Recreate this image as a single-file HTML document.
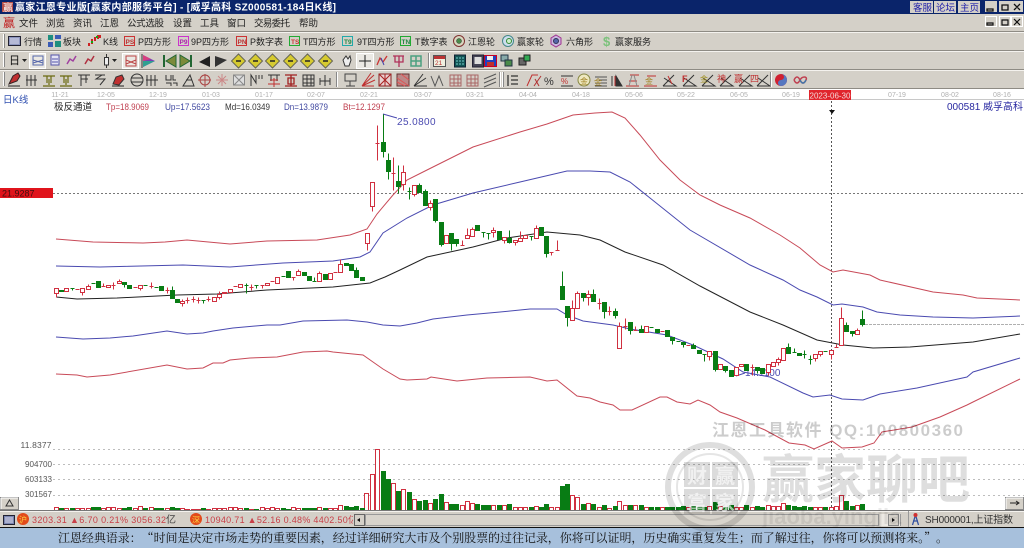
<!DOCTYPE html>
<html><head><meta charset="utf-8"><title>赢家江恩专业版</title>
<style>
html,body{margin:0;padding:0;background:#fff;overflow:hidden}
svg{display:block}
#root{filter:blur(.35px)}
text{font-family:"Liberation Sans","WenQuanYi Zen Hei","Noto Sans CJK SC",sans-serif}
.m{font-size:9.5px;fill:#222}
.t{font-size:9px;fill:#222}
.d{font-size:7px;fill:#b0b0b0}
.v{font-size:8.5px;fill:#555}
.i{fill:none;stroke:#333;stroke-width:1}
.r{fill:none;stroke:#c8323c;stroke-width:1}
</style></head><body>
<svg id="root" width="1024" height="548" viewBox="0 0 1024 548" xmlns="http://www.w3.org/2000/svg">
<rect width="1024" height="548" fill="#fff"/>
<!-- title -->
<rect width="1024" height="14" fill="#0a246a"/>
<rect x="2" y="2" width="11" height="10" fill="#b8504a"/>
<text x="3" y="11" font-size="10" fill="#fff">赢</text>
<text x="15" y="10.500" font-size="10" font-weight="bold" fill="#fff" textLength="321">赢家江恩专业版[赢家内部服务平台] - [威孚高科  SZ000581-184日K线]</text>
<g fill="#d4d0c8"><rect x="910" y="1" width="23" height="12"/><rect x="934" y="1" width="22" height="12"/><rect x="958" y="1" width="22" height="12"/>
<rect x="985" y="1" width="12" height="11"/><rect x="999" y="1" width="12" height="11"/><rect x="1011" y="1" width="12" height="11"/></g>
<g font-size="9.500" fill="#1c1caa"><text x="913" y="11">客服</text><text x="936" y="11">论坛</text><text x="960" y="11">主页</text></g>
<path d="M987 9h6v2h-6zM1002 5h6v5h-6zM1014 4l6 6M1020 4l-6 6" fill="none" stroke="#111" stroke-width="1.300"/>
<!-- chrome -->
<rect y="14" width="1024" height="75" fill="#d4d0c8"/>
<path d="M0 31.500h1024M0 50.500h1024M0 69.500h1024M0 88.500h1024" stroke="#8e8b84"/>
<path d="M0 32.500h1024M0 51.500h1024M0 70.500h1024" stroke="#f4f2ee"/>
<text x="3" y="27" font-size="12" fill="#c02020">赢</text>
<g class="m">
<text x="19" y="26.500">文件</text><text x="46" y="26.500">浏览</text><text x="73" y="26.500">资讯</text><text x="100" y="26.500">江恩</text><text x="127" y="26.500" textLength="37">公式选股</text><text x="173" y="26.500">设置</text><text x="200" y="26.500">工具</text><text x="227" y="26.500">窗口</text><text x="254" y="26.500" textLength="36">交易委托</text><text x="299" y="26.500">帮助</text>
</g>
<g fill="#d4d0c8" stroke="#fff"><rect x="985.500" y="16.500" width="11" height="10"/><rect x="999.500" y="16.500" width="11" height="10"/><rect x="1011.500" y="16.500" width="11" height="10"/></g>
<path d="M987 23h6v2h-6zM1002 20h6v5h-6zM1014 19l6 6M1020 19l-6 6" fill="none" stroke="#111" stroke-width="1.200"/>
<!-- grip bars -->
<path d="M3.500 34v14M3.500 53v14M3.500 72v14" stroke="#fff"/><path d="M4.500 34v14M4.500 53v14M4.500 72v14" stroke="#888"/>
<!-- toolbar 1 -->
<rect x="8.500" y="36.500" width="12" height="9" fill="#8d95bf" stroke="#223"/><path d="M10 39h9M10 41h9M10 43h9" stroke="#dde" />
<g fill="#1f8f7f"><rect x="48" y="35" width="5" height="5"/><rect x="55" y="35" width="6" height="4" fill="#3b5bb5"/><rect x="48" y="42" width="5" height="5" fill="#3b5bb5"/><rect x="55" y="41" width="6" height="6"/></g>
<path d="M89 46v-3M92 44v-5M95 41v-4M98 39v-4M100 38v-3" stroke="#c22" stroke-width="2"/><path d="M92 43v-2M97 38v-2" stroke="#1a1" stroke-width="2"/>
<g font-size="8" font-weight="bold" fill="none" stroke-width="1">
<rect x="124.500" y="36.500" width="10" height="9" stroke="#c33"/><rect x="178.500" y="36.500" width="10" height="9" stroke="#c3c"/><rect x="236.500" y="36.500" width="10" height="9" stroke="#c33"/><rect x="289.500" y="36.500" width="10" height="9" stroke="#2a3"/><rect x="342.500" y="36.500" width="10" height="9" stroke="#2aa"/><rect x="400.500" y="36.500" width="10" height="9" stroke="#2a3"/>
</g>
<g font-size="6.500" font-weight="bold"><text x="125.500" y="44" fill="#b33">PS</text><text x="179.500" y="44" fill="#a2a">P9</text><text x="237.500" y="44" fill="#b33">PN</text><text x="291" y="44" fill="#c33">TS</text><text x="344" y="44" fill="#284">T9</text><text x="401.500" y="44" fill="#284">TN</text></g>
<g class="t">
<text x="24" y="45">行情</text><text x="63" y="45">板块</text><text x="103" y="45">K线</text><text x="138" y="45">P四方形</text><text x="191" y="45">9P四方形</text><text x="250" y="45">P数字表</text><text x="303" y="45">T四方形</text><text x="357" y="45">9T四方形</text><text x="415" y="45">T数字表</text><text x="468" y="45">江恩轮</text><text x="517" y="45">赢家轮</text><text x="566" y="45">六角形</text><text x="615" y="45">赢家服务</text>
</g>
<circle cx="459" cy="41" r="5.500" fill="#d8d8c0" stroke="#803030"/><circle cx="459" cy="41" r="2.500" fill="#4a8a4a" stroke="#333" stroke-width=".5"/>
<circle cx="508" cy="41" r="5.500" fill="#cde" stroke="#488"/><circle cx="509" cy="41" r="2.500" fill="#cec" stroke="#383"/>
<path d="M556 35l5 3v6l-5 3-5-3v-6z" fill="#c8b8e0" stroke="#a03090"/><circle cx="556" cy="41" r="2.500" fill="#56a" stroke="#335"/>
<text x="603" y="46" font-size="13" font-weight="bold" fill="#7cc27c">$</text>
<!-- toolbar 2 -->
<text x="9" y="64" font-size="11" fill="#111">日</text>
<path d="M22 59h5l-2.500 3zM112 59h5l-2.500 3z" fill="#222"/>
<rect x="29.500" y="53.500" width="16" height="15" fill="#ebe9e4" stroke="#fff"/>
<rect x="122.500" y="53.500" width="16" height="15" fill="#ebe9e4" stroke="#fff"/>
<path d="M33 56h10v9H33zM33 60l10 3M43 60l-10 3" fill="none" stroke="#56a"/>
<path d="M51 55h8v10h-8zM52 59h6M52 62h6" fill="#e4e4f4" stroke="#55a"/>
<path d="M67 64l3-5 3 2 3-5" fill="none" stroke="#a040a0" stroke-width="1.500"/><path d="M85 64l3-5 3 2 3-5" fill="none" stroke="#b03040" stroke-width="1.500"/>
<path d="M106.500 54v3M106.500 65v3" stroke="#333"/><rect x="104.500" y="57.500" width="4" height="7.500" fill="#eee" stroke="#333"/>
<path d="M126 56h10v10h-10zM126 60l10 4M136 60l-10 4" fill="none" stroke="#b44"/>
<path d="M142 54v14" stroke="#333"/><path d="M143 55l12 6-12 6z" fill="#7a3fb5"/><path d="M143 61l12 0-12 6z" fill="#2fa090"/><path d="M143 55l8 4-8 2z" fill="#d84080"/>
<path d="M164 55v12" stroke="#263" stroke-width="2"/><path d="M176 55v12l-10-6z" fill="#7b8a3a" stroke="#263"/>
<path d="M191 55v12" stroke="#263" stroke-width="2"/><path d="M180 55v12l10-6z" fill="#7b8a3a" stroke="#263"/>
<path d="M210 56v11l-11-5z" fill="#222"/><path d="M215 56v11l12-7z" fill="#333"/>
<path d="M238.500 54l7 7-7 7-7-7zM255.500 54l7 7-7 7-7-7zM272.500 54l7 7-7 7-7-7zM290.500 54l7 7-7 7-7-7zM307.500 54l7 7-7 7-7-7zM325.500 54l7 7-7 7-7-7z" fill="#d6ca30" stroke="#665"/>
<path d="M236 61h5M253 61h5M270 61h5M288 61h5M305 61h5M323 61h5" stroke="#222" stroke-width="1.500"/>
<path d="M343 60l3-4 2 3 2-3 1 4-2 6h-4z" fill="#eee" stroke="#333"/>
<rect x="356.500" y="53.500" width="17" height="15" fill="#ebe9e4" stroke="#fff"/><path d="M365 55v12M359 61h12" stroke="#222"/>
<path d="M377 65l3-7 3 4 4-6" fill="none" stroke="#c33" stroke-width="1.300"/><path d="M381 58l3 7" stroke="#44a"/>
<path d="M393 56h11M395 56v6h8v-6M399 56v11" fill="none" stroke="#b0305a" stroke-width="1.300"/>
<path d="M411 56h10v10h-10zM411 61h10M416 56v10" fill="none" stroke="#4ba080" stroke-width="1.500"/>
<path d="M428.500 53v15" stroke="#888"/><path d="M429.500 53v15" stroke="#fff"/>
<rect x="433.500" y="55.500" width="12" height="11" fill="#f0f0e0" stroke="#555"/><rect x="434" y="56" width="11" height="3" fill="#b33"/><text x="435" y="65" font-size="6.500" fill="#b33">21</text>
<rect x="454.500" y="55" width="11" height="12" fill="#155" stroke="#123"/><path d="M456 58h8M456 61h8M456 64h8" stroke="#7cc" stroke-dasharray="2 1"/>
<rect x="472.500" y="55" width="11" height="12" fill="#445" stroke="#223"/><rect x="474.500" y="57" width="7" height="7" fill="#ddd"/>
<rect x="484.500" y="55.500" width="12" height="11" fill="#2040c0" stroke="#c02"/><rect x="487" y="56" width="6" height="4" fill="#eee"/><rect x="487" y="62" width="7" height="4" fill="#c03030"/>
<rect x="501" y="55" width="7" height="6" fill="#8aa" stroke="#234"/><rect x="505" y="60" width="7" height="6" fill="#4a8a4a" stroke="#234"/>
<rect x="519" y="58" width="7" height="7" fill="#666" stroke="#222"/><rect x="524" y="55" width="6" height="6" fill="#3a5" stroke="#222"/>
<!-- toolbar 3 -->
<path d="M9 84l4-8 5-3 2 3-3 5z" fill="#c03030" stroke="#322"/><path d="M8 86h12" stroke="#222"/>
<g class="i">
<path d="M27 75v11M31 75v11M35 75v11M26 80h11M147 75v11M151 75v11M155 75v11M146 80h12"/>
<path d="M78 75h12M81 75v11M86 75v8M81 79h7M95 75h10M102 75l-6 4h9l-5 6M131 80a6 6 0 1 0 12 0a6 6 0 1 0-12 0M131 78h12M131 82h12"/>
<path d="M166 75v5h5v-5M173 75v5h3M166 83h5v3M173 83h4v3M183 86l7-11 4 11zM186 80h6"/>
<path d="M251 86v-11l5 8v-8M259 75v4M262 75v4M268 75h12M271 75v6M277 75v6"/>
<path d="M303 75h11v11h-11zM303 79h11M303 83h11M307 75v11M311 75v11M320 78v7M330 78v7M320 81h10M325 75v11"/>
</g>
<path d="M43 76h12M47 76v7M51 76v7M43 86h12M49 79v6M60 76h12M64 76v7M68 76v7M60 86h12M66 79v6" fill="none" stroke="#6a6a10" stroke-width="1.200"/>
<path d="M113 84l3-7 6-2 2 4-5 6z" fill="#c03030" stroke="#333"/><path d="M112 86h12" stroke="#222"/>
<circle cx="205" cy="80" r="5" fill="none" stroke="#a44"/><path d="M198 80h13M205 74v13" stroke="#a44"/>
<path d="M216 80h12M222 74v12M218 76l8 8M226 76l-8 8" stroke="#c88" fill="none"/>
<rect x="233.500" y="75" width="11" height="10" fill="#ddd" stroke="#888"/><path d="M234 75l10 10M244 75l-10 10" stroke="#888"/>
<path d="M268 84h12M274 78v9M270 80h8" stroke="#c03030" fill="none"/>
<path d="M285 75h12M285 86h12M288 78h6v6h-6zM291 75v11" fill="none" stroke="#a02020" stroke-width="1.300"/>
<path d="M336.500 72v15" stroke="#888"/><path d="M337.500 72v15" stroke="#fff"/>
<path d="M345 74h11v7h-11zM350 81v5M346 86h9" fill="none" stroke="#444"/>
<path d="M362 86l12-11M362 86l9-13M362 86l13-6M362 86h12" stroke="#c03030"/>
<rect x="379" y="74" width="12" height="12" fill="#e8d0d0" stroke="#822"/><path d="M379 74l12 12M391 74l-12 12M385 74v12" stroke="#a22"/>
<rect x="397" y="74" width="12" height="12" fill="#b88" stroke="#633"/><path d="M397 78l12 8M397 82l8 4M401 74l8 6" stroke="#d55"/>
<path d="M414 86l12-8M414 86l9-12M414 86h13" class="i"/><path d="M431 76l4 10 4-10 4 10" fill="none" stroke="#555"/>
<g stroke="#a66" fill="none"><path d="M450 75h11v11h-11zM450 79h11M450 83h11M454 75v11M458 75v11"/><path d="M467 75h11v11h-11zM467 79h11M467 83h11M471 75v11M475 75v11"/></g>
<path d="M484 79l12-5M484 83l12-5M484 87l12-5" stroke="#555" fill="none"/>
<path d="M499.500 72v15" stroke="#888"/><path d="M500.500 72v15M502.500 72v15" stroke="#fff"/><path d="M503.500 72v15" stroke="#888"/>
<path d="M508 75v11M511 76h7M511 80h7M511 84h7" stroke="#333" fill="none" stroke-width="1.300"/>
<path d="M527 86l5-11h6" stroke="#c03030" fill="none"/><path d="M535 79l4 7" stroke="#b03030"/><path d="M541 76l-7 10" stroke="#b03030"/>
<text x="544" y="85" font-size="11" fill="#333">%</text>
<path d="M561 76h12M561 86h12" stroke="#333"/><text x="561" y="84" font-size="8" fill="#c03030">%</text>
<circle cx="584" cy="80" r="6" fill="#eee8c0" stroke="#884"/><text x="580" y="84" font-size="8" fill="#a08020">金</text>
<path d="M595 77h12M599 80h8M595 83h12M595 86h12" stroke="#555"/><text x="594" y="85" font-size="8" fill="#a08020">金</text>
<path d="M612 76v10M616 76l6 10h-6z" fill="#333" stroke="#333"/><path d="M615 86v-10" stroke="#c03030"/>
<path d="M630 75h9M626 86h13M629 81h8" stroke="#c03030"/><path d="M632 75l-3 11M634 75l3 11" stroke="#888"/>
<path d="M647 76h9M644 86h13" stroke="#c03030"/><text x="645" y="84" font-size="8" fill="#a08020">金</text>
<path d="M663 86h13l-12-8M663 86l11-11" stroke="#333" fill="none"/><path d="M668 76l4 8" stroke="#c03030"/>
<path d="M683 86h13l-12-8M683 86l11-11M702 86h13l-12-8M702 86l11-11M720 86h13l-12-8M720 86l11-11M739 86h13l-12-8M739 86l11-11M757 86h13l-12-8M757 86l11-11" stroke="#333" fill="none"/>
<text x="682" y="82" font-size="9" font-weight="bold" fill="#c03030">F</text><text x="700" y="82" font-size="8" fill="#a09020">金</text><text x="717" y="82" font-size="9" fill="#c03030">神</text><text x="734" y="82" font-size="9" fill="#c03030">赢</text><text x="750" y="82" font-size="9" fill="#c03030">四</text>
<path d="M770.500 72v15" stroke="#888"/><path d="M771.500 72v15" stroke="#fff"/>
<circle cx="781" cy="80" r="6" fill="#d02030"/><path d="M781 74a6 6 0 0 1 0 12a3 3 0 0 1 0-6a3 3 0 0 0 0-6" fill="#5577c0"/>
<path d="M794 80c2-4 4-4 6 0s4 4 6 0-4-4-6 0-4 4-6 0" fill="none" stroke="#c04050" stroke-width="1.500"/><path d="M800 80c2 4 4 4 6 0" fill="none" stroke="#47a" stroke-width="1.500"/>
<!-- dates -->
<path d="M53 99.500h971" stroke="#c8c8c8"/>
<g class="d" text-anchor="middle"><text x="60" y="97">11-21</text><text x="106" y="97">12-05</text><text x="158" y="97">12-19</text><text x="211" y="97">01-03</text><text x="264" y="97">01-17</text><text x="316" y="97">02-07</text><text x="369" y="97">02-21</text><text x="423" y="97">03-07</text><text x="475" y="97">03-21</text><text x="528" y="97">04-04</text><text x="581" y="97">04-18</text><text x="634" y="97">05-06</text><text x="686" y="97">05-22</text><text x="739" y="97">06-05</text><text x="791" y="97">06-19</text><text x="897" y="97">07-19</text><text x="950" y="97">08-02</text><text x="1002" y="97">08-16</text></g>
<rect x="809" y="90" width="42" height="10" fill="#e0242c"/><text x="830" y="98.500" font-size="8" fill="#f4d8d8" text-anchor="middle">2023-06-30</text>
<text x="3" y="103" font-size="9.500" fill="#3050b0">日K线</text>
<g font-size="9.500"><text x="54" y="110" fill="#222">极反通道</text><text x="106" y="110" fill="#c04050" textLength="43" lengthAdjust="spacingAndGlyphs">Tp=18.9069</text><text x="165" y="110" fill="#4048a0" textLength="45" lengthAdjust="spacingAndGlyphs">Up=17.5623</text><text x="225" y="110" fill="#333" textLength="45" lengthAdjust="spacingAndGlyphs">Md=16.0349</text><text x="284" y="110" fill="#4048a0" textLength="44" lengthAdjust="spacingAndGlyphs">Dn=13.9879</text><text x="343" y="110" fill="#c04050" textLength="42" lengthAdjust="spacingAndGlyphs">Bt=12.1297</text></g>
<text x="947" y="110" font-size="10" fill="#2828a0" textLength="76">000581 威孚高科</text>
<!-- crosshair & grid -->
<path d="M831.500 101V510" stroke="#555" stroke-dasharray="2 2"/>
<path d="M829 110h6l-3 4z" fill="#111"/>
<path d="M53 193.500H1024" stroke="#777" stroke-dasharray="2 2"/>
<rect x="0" y="188" width="53" height="10" fill="#e0141c"/><text x="2" y="196.500" font-size="9" fill="#401010">21.9287</text>
<path d="M865 324.500H1024" stroke="#b0b0b0" stroke-dasharray="3 1"/>
<path d="M53 449.500H1024M53 464.500H1024M53 479.500H1024M53 495.500H1024" stroke="#bdbdbd" stroke-dasharray="2 3"/>
<g class="v"><text x="20.500" y="448" textLength="31">11.8377</text><text x="25" y="467" textLength="27" lengthAdjust="spacingAndGlyphs">904700</text><text x="25" y="482" textLength="27" lengthAdjust="spacingAndGlyphs">603133</text><text x="25" y="497" textLength="27" lengthAdjust="spacingAndGlyphs">301567</text></g>
<!-- lines -->
<g fill="none" stroke-width="1">
<path stroke="#c84a58" d="M56 239L93 242 143 243 165 242 187 240 230 244 267 241 317 240 350 235 367 229 377 214 393 195 407 180 427 170 473 147 520 132 547 124 573 115 595 113 612 112 625 118 640 135 660 160 680 180 700 195 720 205 750 218 780 235 800 248 820 265 833 272 843 270 870 275 880 280 933 292 963 295 977 298 1020 300"/>
<path stroke="#4a4ab0" d="M56 266L100 267 183 265 230 267 283 263 333 261 360 257 370 252 383 233 407 218 433 205 473 193 520 182 567 171 590 171 610 172 630 182 650 198 690 230 750 265 783 280 800 290 817 297 833 305 842 304 863 307 877 312 900 315 933 317 973 318 1020 316"/>
<path stroke="#222" d="M56 297L77 299 117 298 177 295 217 294 267 290 333 287 370 283 385 277 400 270 427 257 473 247 507 238 547 232 580 235 600 240 625 252 663 265 700 286 750 312 783 325 817 340 843 345 873 348 910 347 973 342 1020 334"/>
<path stroke="#4a4ab0" d="M56 337L83 339 110 338 133 336 167 331 187 334 203 333 213 331 233 328 267 325 280 325 303 321 347 320 367 322 383 325 400 326 417 323 433 319 467 315 500 312 530 309 557 309 567 315 583 321 613 325 630 329 667 335 693 345 723 359 743 372 770 377 803 393 813 397 830 395 842 399 863 400 880 394 917 388 967 377 973 372 1020 358"/>
<path stroke="#c84a58" d="M56 374L77 375 87 377 110 375 167 365 187 369 203 368 213 363 223 363 230 360 250 358 277 357 303 352 327 351 333 352 363 355 373 362 383 369 400 379 407 380 427 379 431 377 457 381 487 378 530 377 547 381 557 380 577 396 590 398 600 402 613 405 620 410 632 410 660 397 667 397 677 402 690 404 698 400 710 405 720 412 737 418 765 430 789 443 805 445 814 449 832 441 842 448 862 447 874 443 882 432 912 427 940 417 967 405 973 402 1020 379"/>
<path stroke="#4a4ab0" d="M383 114L397 118M736 376L745 373"/>
</g>
<text x="397" y="125" font-size="10" fill="#4a4ab0" letter-spacing=".4">25.0800</text>
<text x="745" y="376" font-size="10" fill="#4a4ab0">14.1100</text>
<!-- candles -->
<g transform="translate(.5 .5)">
<path fill="#fff" stroke="#d03040" d="M54 288h4v5h-4zM56 293v4M64 288h4v3h-4zM75 289h4M80 288h4v4h-4zM82 292v3M86 286h4v3h-4zM88 284v2M101 286h4M103 283v3M106 285h4v2h-4zM111 285h4M113 282v7M117 281h4v2h-4zM119 279v2M133 287h4M138 285h4v3h-4zM140 288v2M149 286h4M151 282v6M165 290h4M167 287v6M180 301h4v2h-4zM182 299v2M182 303v3M185 300h4M187 297v6M191 299h4M193 296v6M196 300h4M198 297v6M206 299h4M208 296v5M212 297h4v4h-4zM217 294h4v3h-4zM219 291v3M219 297v2M222 292h4v1h-4zM228 289h4v3h-4zM233 286h4M238 284h4v3h-4zM249 287h4M251 284v6M260 285h4M262 285v3M265 283h4v2h-4zM270 281h4M275 277h4v6h-4zM291 277h4M293 277v3M296 271h4v4h-4zM298 269v2M317 273h4v8h-4zM319 271v2M328 273h4v6h-4zM333 272h4M338 264h4v8h-4zM340 259v5M365 233h4v10h-4zM367 243v7M370 182h4v24h-4zM372 206v5M375 143h4M377 125v35M391 173h4M393 157v33M401 172h4v12h-4zM403 165v7M403 184v6M412 185h4v9h-4zM414 194v2M428 203h4v4h-4zM430 200v3M430 207v3M444 235h4v8h-4zM460 245h4M462 240v5M465 235h4v3h-4zM467 228v7M470 229h4v7h-4zM472 227v2M491 230h4v2h-4zM493 227v3M493 232v5M502 237h4v3h-4zM504 240v3M513 240h4v2h-4zM515 242v3M518 238h4v3h-4zM520 231v7M523 235h4v3h-4zM534 228h4v10h-4zM536 225v3M549 252h4M551 252v3M555 250h4M557 240v10M570 308h4v12h-4zM572 300v8M575 293h4v15h-4zM577 291v2M586 294h4v3h-4zM588 290v4M588 297v8M597 303h4M599 298v11M607 311h4M609 306v9M617 326h4v22h-4zM619 322v4M623 326h4M625 318v11M633 330h4M635 326v4M644 326h4v6h-4zM660 331h4M686 345h4M707 351h4v5h-4zM709 356v4M718 364h4v5h-4zM734 367h4v8h-4zM739 364h4v2h-4zM750 367h4M752 364v11M766 364h4v8h-4zM768 372v3M771 362h4v4h-4zM776 359h4v3h-4zM778 357v2M778 362v3M781 348h4v12h-4zM813 354h4v4h-4zM815 358v3M818 351h4v3h-4zM820 354v2M829 350h4v4h-4zM831 354v5M834 347h4M836 344v3M839 318h4v27h-4zM841 307v11M855 330h4v4h-4zM857 328v2"/>
<path fill="#087c14" stroke="#087c14" d="M59 290h4v1h-4zM70 288h4M72 288v2M122 282h4v2h-4zM124 284v3M127 285h4v3h-4zM91 283h4M96 281h4v6h-4zM143 285h4M154 287h4M159 286h4v4h-4zM170 290h4v8h-4zM172 286v4M175 299h4v3h-4zM201 300h4M203 300v3M244 285h4M246 283v10M254 285h4M256 285v3M281 276h4M286 271h4v6h-4zM302 272h4v3h-4zM307 276h4v4h-4zM312 281h4M314 277v4M323 274h4v5h-4zM344 263h4v2h-4zM349 264h4v6h-4zM354 270h4v7h-4zM356 267v3M360 277h4v3h-4zM381 142h4v9h-4zM383 114v28M383 151v6M386 160h4v11h-4zM388 153v7M388 171v8M396 181h4v5h-4zM398 165v16M398 186v7M407 191h4M409 187v12M417 185h4v7h-4zM419 183v2M423 191h4v14h-4zM425 189v2M433 199h4v21h-4zM435 220v2M439 222h4v22h-4zM441 244v2M449 233h4v10h-4zM451 243v7M454 239h4v4h-4zM456 243v3M475 225h4v5h-4zM481 232h4M483 232v5M486 233h4M488 233v6M497 231h4v8h-4zM507 238h4v4h-4zM509 230v8M509 242v1M529 236h4M531 236v4M539 227h4v8h-4zM544 236h4v17h-4zM546 253v4M560 286h4v13h-4zM562 271v15M565 306h4v11h-4zM567 317v9M581 293h4v4h-4zM583 297v4M591 294h4v7h-4zM593 289v5M602 302h4v9h-4zM604 311v7M613 311h4v4h-4zM615 308v3M615 315v3M628 322h4v8h-4zM630 330v4M639 329h4v3h-4zM641 325v4M649 327h4M655 329h4v3h-4zM665 330h4v6h-4zM670 337h4v3h-4zM672 340v4M676 341h4M681 342h4v2h-4zM683 344v3M691 345h4v3h-4zM693 343v2M697 350h4v3h-4zM702 354h4M704 354v7M713 351h4v18h-4zM715 369v2M723 366h4v4h-4zM725 370v2M729 370h4v6h-4zM744 364h4v6h-4zM755 367h4v3h-4zM757 370v3M760 368h4v5h-4zM786 347h4v6h-4zM788 343v4M792 352h4M794 348v4M797 353h4v2h-4zM802 354h4M804 350v8M808 359h4M810 355v9M823 351h4M844 325h4v6h-4zM846 322v3M850 331h4v2h-4zM852 333v3M860 319h4v5h-4zM862 310v9M862 324v2"/>
<!-- volume -->
<path fill="#fff" stroke="#d03040" d="M54 507h4v3h-4zM64 508h4v2h-4zM75 508h4v2h-4zM80 508h4v2h-4zM86 508h4v2h-4zM101 508h4v2h-4zM106 507h4v3h-4zM111 507h4v3h-4zM117 508h4v2h-4zM133 508h4v2h-4zM138 506h4v4h-4zM149 507h4v3h-4zM165 508h4v2h-4zM180 508h4v2h-4zM185 509h4v1h-4zM191 509h4v1h-4zM196 509h4v1h-4zM206 509h4v1h-4zM212 508h4v2h-4zM217 508h4v2h-4zM222 508h4v2h-4zM228 507h4v3h-4zM233 507h4v3h-4zM238 508h4v2h-4zM249 509h4v1h-4zM260 507h4v3h-4zM265 508h4v2h-4zM270 507h4v3h-4zM275 508h4v2h-4zM291 507h4v3h-4zM296 508h4v2h-4zM317 507h4v3h-4zM328 508h4v2h-4zM333 508h4v2h-4zM338 505h4v5h-4zM364 493h4v17h-4zM370 474h4v36h-4zM375 449h4v61h-4zM391 483h4v27h-4zM401 489h4v21h-4zM412 499h4v11h-4zM428 503h4v7h-4zM444 502h4v8h-4zM460 505h4v5h-4zM465 501h4v9h-4zM470 503h4v7h-4zM491 505h4v5h-4zM502 505h4v5h-4zM513 507h4v3h-4zM518 507h4v3h-4zM523 507h4v3h-4zM534 506h4v4h-4zM549 507h4v3h-4zM555 507h4v3h-4zM570 495h4v15h-4zM575 497h4v13h-4zM586 503h4v7h-4zM597 507h4v3h-4zM607 508h4v2h-4zM617 501h4v9h-4zM623 505h4v5h-4zM633 505h4v5h-4zM644 507h4v3h-4zM660 507h4v3h-4zM686 507h4v3h-4zM707 506h4v4h-4zM718 506h4v4h-4zM734 507h4v3h-4zM739 507h4v3h-4zM750 507h4v3h-4zM766 505h4v5h-4zM771 506h4v4h-4zM776 506h4v4h-4zM781 503h4v7h-4zM813 507h4v3h-4zM818 507h4v3h-4zM829 507h4v3h-4zM834 506h4v4h-4zM839 495h4v15h-4zM855 505h4v5h-4z"/>
<path fill="#087c14" stroke="#087c14" d="M59 508h4v2h-4zM70 508h4v2h-4zM91 507h4v3h-4zM96 507h4v3h-4zM122 508h4v2h-4zM127 507h4v3h-4zM143 508h4v2h-4zM154 508h4v2h-4zM159 508h4v2h-4zM170 507h4v3h-4zM175 508h4v2h-4zM201 508h4v2h-4zM244 508h4v2h-4zM254 509h4v1h-4zM281 508h4v2h-4zM286 509h4v1h-4zM302 508h4v2h-4zM307 508h4v2h-4zM312 508h4v2h-4zM323 508h4v2h-4zM344 506h4v4h-4zM349 507h4v3h-4zM354 506h4v4h-4zM360 508h4v2h-4zM381 471h4v39h-4zM386 479h4v31h-4zM396 491h4v19h-4zM407 492h4v18h-4zM417 501h4v9h-4zM423 500h4v10h-4zM433 499h4v11h-4zM439 494h4v16h-4zM449 504h4v6h-4zM454 504h4v6h-4zM475 504h4v6h-4zM481 505h4v5h-4zM486 505h4v5h-4zM497 505h4v5h-4zM507 504h4v6h-4zM529 507h4v3h-4zM539 507h4v3h-4zM544 504h4v6h-4zM560 486h4v24h-4zM565 484h4v26h-4zM581 504h4v6h-4zM591 504h4v6h-4zM602 505h4v5h-4zM613 506h4v4h-4zM628 505h4v5h-4zM639 505h4v5h-4zM649 507h4v3h-4zM655 507h4v3h-4zM665 507h4v3h-4zM670 507h4v3h-4zM676 507h4v3h-4zM681 506h4v4h-4zM691 506h4v4h-4zM697 507h4v3h-4zM702 507h4v3h-4zM713 502h4v8h-4zM723 507h4v3h-4zM729 505h4v5h-4zM744 505h4v5h-4zM755 506h4v4h-4zM760 507h4v3h-4zM786 505h4v5h-4zM792 506h4v4h-4zM797 507h4v3h-4zM802 506h4v4h-4zM808 507h4v3h-4zM823 507h4v3h-4zM844 501h4v9h-4zM850 506h4v4h-4zM860 504h4v6h-4z"/>
</g>
<!-- small buttons -->
<rect x=".5" y="497.500" width="18" height="12" fill="#d4d0c8" stroke="#888"/><path d="M1 498h17M1 498v11" stroke="#fff"/><path d="M9.500 500l-3.500 6h7z" fill="none" stroke="#333"/>
<rect x="1005.500" y="497.500" width="18" height="12" fill="#d4d0c8" stroke="#888"/><path d="M1006 498h17M1006 498v11" stroke="#fff"/><path d="M1010 503h9M1016 501l3 2-3 2" fill="none" stroke="#222"/>
<!-- status bar -->
<rect y="510" width="1024" height="17" fill="#d4d0c8"/>
<path d="M0 510.500h1024" stroke="#777"/><path d="M0 511.500h1024" stroke="#f4f2ee"/>
<path d="M0 527.500h1024" stroke="#111"/>
<rect x="3.500" y="515.500" width="11" height="9" fill="#7a85b0" stroke="#223"/><path d="M5 518h8M5 520h8M5 522h8" stroke="#dde"/>
<circle cx="23" cy="519" r="6" fill="#e24a1a"/><text x="19" y="522.500" font-size="8" fill="#fbd040">沪</text>
<circle cx="196" cy="519" r="6" fill="#e24a1a"/><text x="192" y="522.500" font-size="8" fill="#fbd040">深</text>
<text x="32" y="523" font-size="9" fill="#c84048" textLength="134">3203.31 ▲6.70 0.21% 3056.32</text><text x="166" y="523" font-size="10" fill="#444">亿</text>
<svg x="205" y="512" width="148" height="15"><text x="0" y="11" font-size="9" fill="#c84048" textLength="152">10940.71 ▲52.16 0.48% 4402.50亿</text></svg>
<rect x="354.500" y="514.500" width="10" height="11" fill="#d4d0c8" stroke="#666"/><path d="M360 518v4l-3-2z" fill="#111"/>
<rect x="365.500" y="514.500" width="513" height="11" fill="#d8d4cc" stroke="#999"/>
<rect x="880" y="514" width="20" height="12" fill="#ece9e3"/>
<rect x="888.500" y="514.500" width="10" height="11" fill="#d4d0c8" stroke="#888"/><path d="M892 518v4l3-2z" fill="#111"/>
<path d="M900.500 514v12M908.500 511v16" stroke="#999"/>
<path d="M915.500 515l-3 10M915.500 515l3 10M913 521h5" stroke="#3050a0" fill="none" stroke-width="1.300"/><circle cx="915.500" cy="515" r="2" fill="#d03030"/>
<text x="925" y="523" font-size="10" fill="#333" textLength="88">SH000001,上证指数</text>
<!-- quote -->
<rect y="528" width="1024" height="20" fill="#a7c0dc"/>
<text x="58" y="542" font-size="12" fill="#111" textLength="890" style="font-family:'Noto Serif CJK SC','Noto Sans CJK SC',serif">江恩经典语录：“时间是决定市场走势的重要因素，经过详细研究大市及个别股票的过往记录，你将可以证明，历史确实重复发生；而了解过往，你将可以预测将来。”。</text>
<!-- watermark -->
<g>
<text x="712" y="436" font-size="17" font-weight="bold" fill="#000" fill-opacity=".2" textLength="251">江恩工具软件 QQ:100800360</text>
<text x="762" y="498" font-size="52" font-weight="bold" fill="#000" fill-opacity=".13" textLength="208">赢家聊吧</text>
<circle cx="710" cy="487" r="42" fill="none" stroke="#000" stroke-opacity=".13" stroke-width="6"/>
<circle cx="710" cy="487" r="33" fill="none" stroke="#000" stroke-opacity=".1" stroke-width="2"/>
<rect x="684" y="462" width="26" height="25" fill="#000" fill-opacity=".14"/><rect x="712" y="462" width="26" height="25" fill="#000" fill-opacity=".14"/><rect x="684" y="489" width="26" height="25" fill="#000" fill-opacity=".14"/><rect x="712" y="489" width="26" height="25" fill="#000" fill-opacity=".14"/>
<g font-size="20" font-weight="bold" fill="#fff" fill-opacity=".6"><text x="687" y="483">财</text><text x="715" y="483">赢</text><text x="687" y="510">富</text><text x="715" y="510">家</text></g>
<svg x="740" y="500" width="200" height="27"><text x="22" y="24" font-size="22" font-weight="bold" fill="#000" fill-opacity=".08">jiaoba.yingjia</text></svg>
</g>
</svg>
</body></html>
